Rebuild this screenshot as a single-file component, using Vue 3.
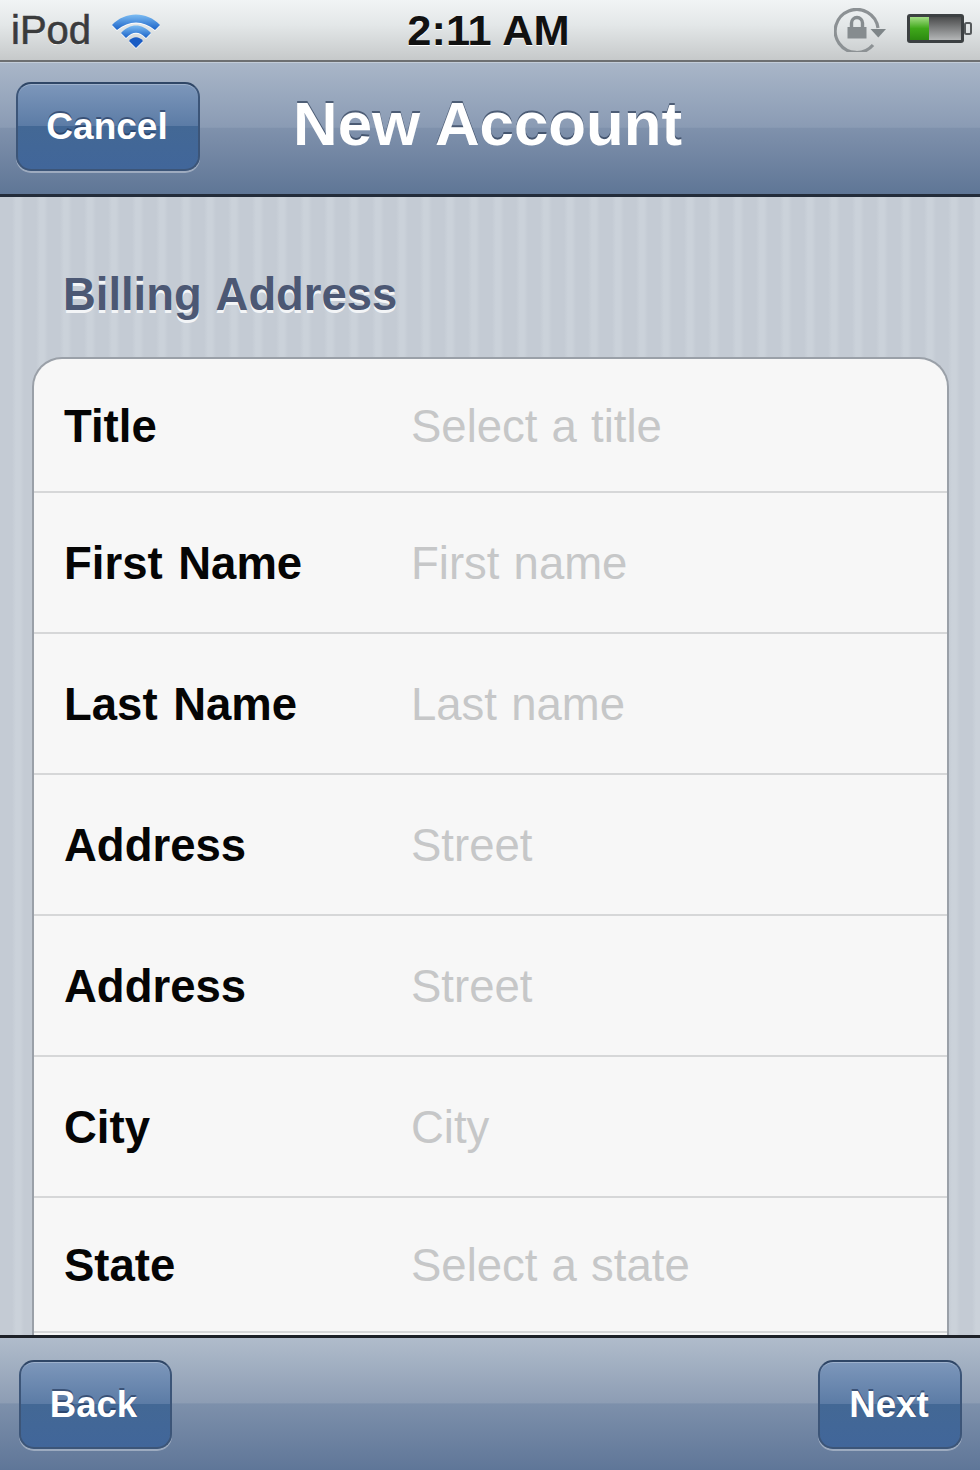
<script setup>
const rows = [
  { label: 'Title', hint: 'Select a title', size: 'first' },
  { label: 'First Name', hint: 'First name', size: '' },
  { label: 'Last Name', hint: 'Last name', size: '' },
  { label: 'Address', hint: 'Street', size: '' },
  { label: 'Address', hint: 'Street', size: '' },
  { label: 'City', hint: 'City', size: '' },
  { label: 'State', hint: 'Select a state', size: 'state' },
  { label: '', hint: '', size: 'tail' }
]
</script>

<template>
  <div class="phone">
    <header class="status">
      <div class="status-left">
        <span class="carrier">iPod</span>
        <svg class="wifi" viewBox="0 0 50 38" width="50" height="38">
          <defs>
            <linearGradient id="wf" x1="0" y1="0" x2="0" y2="1">
              <stop offset="0" stop-color="#7cbcf2" />
              <stop offset="1" stop-color="#1a62c8" />
            </linearGradient>
          </defs>
          <path d="M1 14 C14 0 36 0 49 14 L44 19 C32 9 18 9 6 19 Z" fill="url(#wf)" />
          <path d="M10 22 C19 12 31 12 40 22 L35 27 C28 20 22 20 15 27 Z" fill="url(#wf)" />
          <path d="M18 30 C22 25 28 25 32 30 L25 37 Z" fill="#1a5cc4" />
        </svg>
      </div>
      <span class="clock">2:11 AM</span>
      <div class="status-right">
        <svg class="rotlock" viewBox="0 0 54 44" width="54" height="44">
          <path d="M39 37 A21.5 21.5 0 1 1 44 20" fill="none" stroke="#8c9194" stroke-width="3.2" />
          <path d="M36.5 21 L52 21 L44.3 29.5 Z" fill="#7e8588" />
          <rect x="13.5" y="19" width="19" height="11.5" fill="#868c8f" />
          <path d="M17.5 20 V15 A5.5 5.5 0 0 1 28.5 15 V20" fill="none" stroke="#868c8f" stroke-width="3.4" />
        </svg>
        <svg class="battery" viewBox="0 0 66 34" width="66" height="34">
          <defs>
            <linearGradient id="bg" x1="0" y1="0" x2="0" y2="1">
              <stop offset="0" stop-color="#4a4b4c" />
              <stop offset="1" stop-color="#b4b6b7" />
            </linearGradient>
            <linearGradient id="bf" x1="0" y1="0" x2="0" y2="1">
              <stop offset="0" stop-color="#a4dd86" />
              <stop offset=".5" stop-color="#3fa81a" />
              <stop offset="1" stop-color="#2c8a10" />
            </linearGradient>
          </defs>
          <rect x="1" y="1" width="57" height="29" rx="3" fill="#3c4042" />
          <rect x="4" y="4" width="51" height="23" fill="url(#bg)" />
          <rect x="4" y="4" width="19" height="23" fill="url(#bf)" />
          <rect x="59" y="10" width="6" height="11" rx="1.5" fill="none" stroke="#55595b" stroke-width="2" />
        </svg>
      </div>
    </header>

    <nav class="navbar">
      <button class="btn cancel">Cancel</button>
      <h1 class="title">New Account</h1>
    </nav>

    <main class="content">
      <h2 class="section">Billing Address</h2>
      <div class="card">
        <div v-for="(r, i) in rows" :key="i" class="row" :class="r.size">
          <span class="label">{{ r.label }}</span>
          <span class="hint">{{ r.hint }}</span>
        </div>
      </div>
    </main>

    <footer class="toolbar">
      <button class="btn back">Back</button>
      <button class="btn next">Next</button>
    </footer>
  </div>
</template>

<style scoped>
.phone {
  width: 980px;
  height: 1470px;
  display: flex;
  flex-direction: column;
  overflow: hidden;
  font-family: "Liberation Sans", Arial, sans-serif;
}
.status {
  height: 62px;
  flex: none;
  box-sizing: border-box;
  padding: 0 8px 0 11px;
  display: grid;
  grid-template-columns: 1fr auto 1fr;
  align-items: center;
  background: linear-gradient(#f1f4f5, #e4e8e9 40%, #c6c9ca);
  border-bottom: 2px solid #6d6f71;
}
.status-left {
  display: flex;
  align-items: center;
  gap: 20px;
}
.carrier {
  font-size: 40px;
  color: #3a3b3c;
  -webkit-text-stroke: 0.6px #3a3b3c;
  text-shadow: 0 1px 0 #fff;
}
.wifi {
  margin-top: -1px;
  filter: drop-shadow(0 1px 0 rgba(255, 255, 255, .9));
}
.clock {
  font-size: 43.4px;
  font-weight: 700;
  color: #111;
  margin-right: 6px;
  text-shadow: 0 1px 0 #fff;
}
.status-right {
  display: flex;
  justify-content: flex-end;
  align-items: center;
  gap: 18px;
}
.navbar {
  height: 135px;
  flex: none;
  box-sizing: border-box;
  display: flex;
  align-items: center;
  padding: 0 0 6px 16px;
  background: linear-gradient(#a9b6c8, #8a9bb4 49%, #7f91ac 50%, #5f7696);
  border-bottom: 3px solid #232c3a;
  border-top: 1px solid #c3ccd8;
}
.title {
  margin: -4px 0 0 93px;
  font-size: 61.8px;
  font-weight: 700;
  color: #fff;
  text-shadow: 0 -2px 0 rgba(40, 55, 80, .65);
}
.btn {
  flex: none;
  box-sizing: border-box;
  height: 89px;
  padding: 0;
  font-family: inherit;
  font-weight: 700;
  color: #fff;
  border-radius: 15px;
  border: 2px solid #3c5578;
  border-top-color: #2f4666;
  background: linear-gradient(#7d97bb, #5c7ca6 49%, #436895 50%, #41669a);
  box-shadow: 0 2px 0 rgba(255, 255, 255, .35), inset 0 1px 0 rgba(255, 255, 255, .25);
  text-shadow: 0 -2px 0 rgba(30, 50, 85, .6);
}
.cancel {
  width: 184px;
  font-size: 37px;
  margin-top: 2px;
  padding-right: 2px;
}
.content {
  flex: 1;
  min-height: 0;
  overflow: hidden;
  padding: 0 32px;
  background-color: #c5ccd5;
  background-image: repeating-linear-gradient(90deg, #c4cbd4 0, #c4cbd4 12px, #cbd2da 16px, #cbd2da 20px, #c4cbd4 24px);
}
.section {
  margin: 0;
  padding: 70px 0 34px 31px;
  line-height: 56px;
  font-size: 45.4px;
  font-weight: 700;
  color: #4c5874;
  word-spacing: 3px;
  text-shadow: 0 3px 0 #f3f5f7;
}
.card {
  box-sizing: border-box;
  background: #f7f7f7;
  border: 2px solid #9aa0a8;
  border-radius: 30px 30px 0 0;
  border-bottom: none;
  width: 917px;
}
.row {
  box-sizing: border-box;
  height: 141px;
  display: flex;
  align-items: center;
  padding: 3px 0 0 30px;
  border-bottom: 2px solid #d6d7d8;
  font-size: 45.5px;
}
.row.first { height: 134px; padding-top: 4px; }
.row.state { height: 135px; padding-top: 2px; }
.row.tail { border-bottom: none; }
.label {
  width: 347px;
  flex: none;
  font-weight: 700;
  color: #050505;
  word-spacing: 3px;
}
.hint {
  color: #c6c7c8;
  word-spacing: 1.5px;
}
.toolbar {
  height: 135px;
  flex: none;
  box-sizing: border-box;
  display: flex;
  justify-content: space-between;
  align-items: center;
  padding: 0 18px 0 19px;
  border-top: 3px solid #1d2128;
  background: linear-gradient(#b0bccb, #8d9db4 49%, #7d90ab 50%, #5f7698);
}
.back { width: 153px; font-size: 36.6px; margin-top: 1px; padding-right: 4px; }
.next { width: 144px; font-size: 36.6px; margin-top: 1px; padding-right: 2px; }
</style>
